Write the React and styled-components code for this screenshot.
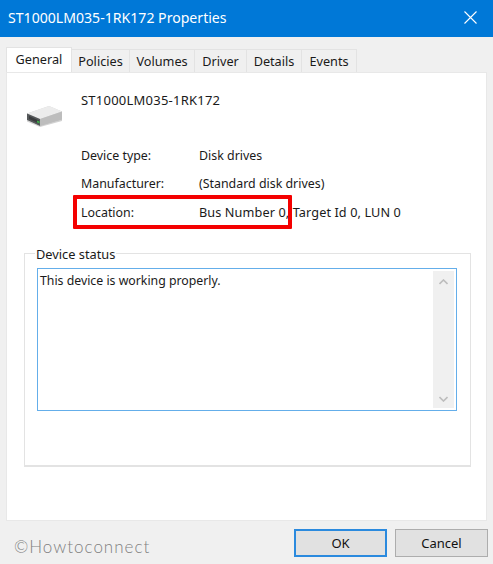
import React from 'react';
import styled, { createGlobalStyle } from 'styled-components';

const GlobalStyle = createGlobalStyle`
  html, body {
    margin: 0;
    padding: 0;
    background: #f0f0f0;
  }
  body {
    font-family: "Noto Sans", "Open Sans", sans-serif;
    color: #1a1a1a;
  }
`;

const Dialog = styled.div`
  width: 493px;
  height: 564px;
  display: flex;
  flex-direction: column;
  background: #f0f0f0;
  overflow: hidden;
`;

const TitleBar = styled.div`
  height: 37px;
  flex: none;
  display: flex;
  align-items: center;
  justify-content: space-between;
  padding: 0 16px 2px 8px;
  box-sizing: border-box;
  background: #0078d7;
  color: #fff;
  font-size: 14.1px;
`;

const TabStrip = styled.div`
  display: flex;
  align-items: flex-end;
  height: 35px;
  flex: none;
  padding: 0 0 0 6px;
`;

const Tab = styled.div`
  height: ${p => (p.$active ? '26px' : '23px')};
  width: ${p => p.$w}px;
  box-sizing: border-box;
  display: flex;
  align-items: center;
  justify-content: center;
  padding-bottom: ${p => (p.$active ? '3px' : '1px')};
  font-size: 12.7px;
  color: #1a1a1a;
  background: ${p => (p.$active ? '#fff' : '#f0f0f0')};
  border: 1px solid #e3e3e3;
  border-bottom: none;
  border-left: ${p => (p.$active ? '1px solid #e3e3e3' : 'none')};
  margin-bottom: ${p => (p.$active ? '-1px' : '0')};
  position: relative;
`;

const Panel = styled.div`
  height: 449px;
  flex: none;
  margin: 0 6px;
  box-sizing: border-box;
  background: #fff;
  border: 1px solid #e8e8e8;
  padding: 12px 17px 0;
  position: relative;
`;

const DeviceHead = styled.div`
  display: flex;
  height: 55px;
`;

const DeviceIcon = styled.div`
  width: 57px;
  padding: 20px 0 0 2px;
  box-sizing: border-box;
`;

const DeviceName = styled.div`
  font-size: 13px;
  letter-spacing: 0.23px;
  line-height: 30px;
  height: 30px;
`;

const InfoGrid = styled.div`
  display: grid;
  grid-template-columns: 118px 1fr;
  grid-auto-rows: 28px;
  align-items: baseline;
  padding-left: 57px;
  font-size: 12.4px;
  line-height: 28px;
  margin-top: 2px;
`;

const InfoValue = styled.div`
  letter-spacing: ${p => (p.$wide ? '0.1px' : '0')};
  font-size: ${p => (p.$wide ? '12.7px' : '12.4px')};
`;

const GroupBox = styled.div`
  margin-top: 27px;
  width: 447px;
  height: 214px;
  box-sizing: border-box;
  padding: 14px 13px 0 12px;
  border: 1px solid #e3e3e3;
  border-bottom-width: 2px;
  position: relative;
`;

const Legend = styled.div`
  position: absolute;
  left: 10px;
  top: -9px;
  padding: 0 1px;
  background: #fff;
  font-size: 12.8px;
  line-height: 18px;
`;

const StatusBox = styled.div`
  width: 420px;
  height: 143px;
  box-sizing: border-box;
  display: flex;
  justify-content: space-between;
  border: 1px solid #64aeea;
  padding: 2px;
  font-size: 12.3px;
`;

const StatusText = styled.div`
  line-height: 18px;
  padding-top: 1px;
`;

const ScrollTrack = styled.div`
  width: 21px;
  display: flex;
  flex-direction: column;
  justify-content: space-between;
  align-items: center;
  padding: 8px 0 6px;
  box-sizing: border-box;
  background: #f0f0f0;
`;

const Footer = styled.div`
  flex: 1;
  display: flex;
  align-items: flex-start;
  padding: 8px 5px 0 14px;
`;

const Watermark = styled.div`
  flex: 1;
  font-family: "Lato", sans-serif;
  font-weight: 300;
  font-size: 17px;
  letter-spacing: 1px;
  color: #808080;
  line-height: 22px;
  margin-top: 7px;
`;

const Button = styled.button`
  width: ${p => p.$w}px;
  height: 28px;
  margin-left: ${p => p.$gap}px;
  box-sizing: border-box;
  background: #e1e1e1;
  border: ${p => (p.$primary ? '2px solid #2b8ade' : '1px solid #adadad')};
  font-family: inherit;
  font-size: 13px;
  color: #111;
  padding: 0;
`;

const Highlight = styled.div`
  position: absolute;
  left: 66px;
  top: 122px;
  width: 219px;
  height: 34px;
  box-sizing: border-box;
  border: 4px solid #f40000;
  border-radius: 1px;
`;

const CloseIcon = () => (
  <svg width="13" height="13" viewBox="0 0 13 13" fill="none" stroke="#fff" strokeWidth="1.1">
    <path d="M.5.5l12 12M12.5.5l-12 12" />
  </svg>
);

const DriveIcon = () => (
  <svg width="37" height="22" viewBox="0 0 37 22">
    <path d="M1 8.500 23 1l13 5.500v8L14 21 1 15z" fill="#d4d4d4" />
    <path d="M1 8.500 23 1l13 5.500L14 14z" fill="#ececec" />
    <path d="M14 14l22-7.500v8L14 21z" fill="#bdbdbd" />
    <path d="M1 8.500 14 14v7L1 15z" fill="#55585a" />
    <path d="M3 11l10 4.500v3L3 14z" fill="#3a3c3e" />
    <path d="M11 15.500l2.500 1.100v2L11 17.500z" fill="#3fae4a" />
    <path d="M1 15l13 6 22-6.500v1.500L14 22 1 16.500z" fill="#9c9c9c" opacity=".45" />
  </svg>
);

const Chevron = ({ down }) => (
  <svg width="9" height="6" viewBox="0 0 9 6" fill="none" stroke="#bdbdbd" strokeWidth="1.6">
    <path d={down ? 'M.5 1l4 4 4-4' : 'M.5 5l4-4 4 4'} />
  </svg>
);

const tabs = [
  { label: 'Policies', w: 58 },
  { label: 'Volumes', w: 65 },
  { label: 'Driver', w: 52 },
  { label: 'Details', w: 55 },
  { label: 'Events', w: 55 },
];

const info = [
  ['Device type:', 'Disk drives'],
  ['Manufacturer:', '(Standard disk drives)'],
  ['Location:', 'Bus Number 0, Target Id 0, LUN 0', true],
];

export default function App() {
  return (
    <Dialog>
      <GlobalStyle />
      <TitleBar>
        <span>ST1000LM035-1RK172 Properties</span>
        <CloseIcon />
      </TitleBar>

      <TabStrip>
        <Tab $active $w={66}>General</Tab>
        {tabs.map(t => (
          <Tab key={t.label} $w={t.w}>{t.label}</Tab>
        ))}
      </TabStrip>

      <Panel>
        <DeviceHead>
          <DeviceIcon><DriveIcon /></DeviceIcon>
          <DeviceName>ST1000LM035-1RK172</DeviceName>
        </DeviceHead>

        <InfoGrid>
          {info.map(([k, v, wide]) => (
            <React.Fragment key={k}>
              <div>{k}</div>
              <InfoValue $wide={wide}>{v}</InfoValue>
            </React.Fragment>
          ))}
        </InfoGrid>

        <GroupBox>
          <Legend>Device status</Legend>
          <StatusBox>
            <StatusText>This device is working properly.</StatusText>
            <ScrollTrack>
              <Chevron />
              <Chevron down />
            </ScrollTrack>
          </StatusBox>
        </GroupBox>

        <Highlight />
      </Panel>

      <Footer>
        <Watermark>©Howtoconnect</Watermark>
        <Button $primary $w={93}>OK</Button>
        <Button $w={93} $gap={8}>Cancel</Button>
      </Footer>
    </Dialog>
  );
}
